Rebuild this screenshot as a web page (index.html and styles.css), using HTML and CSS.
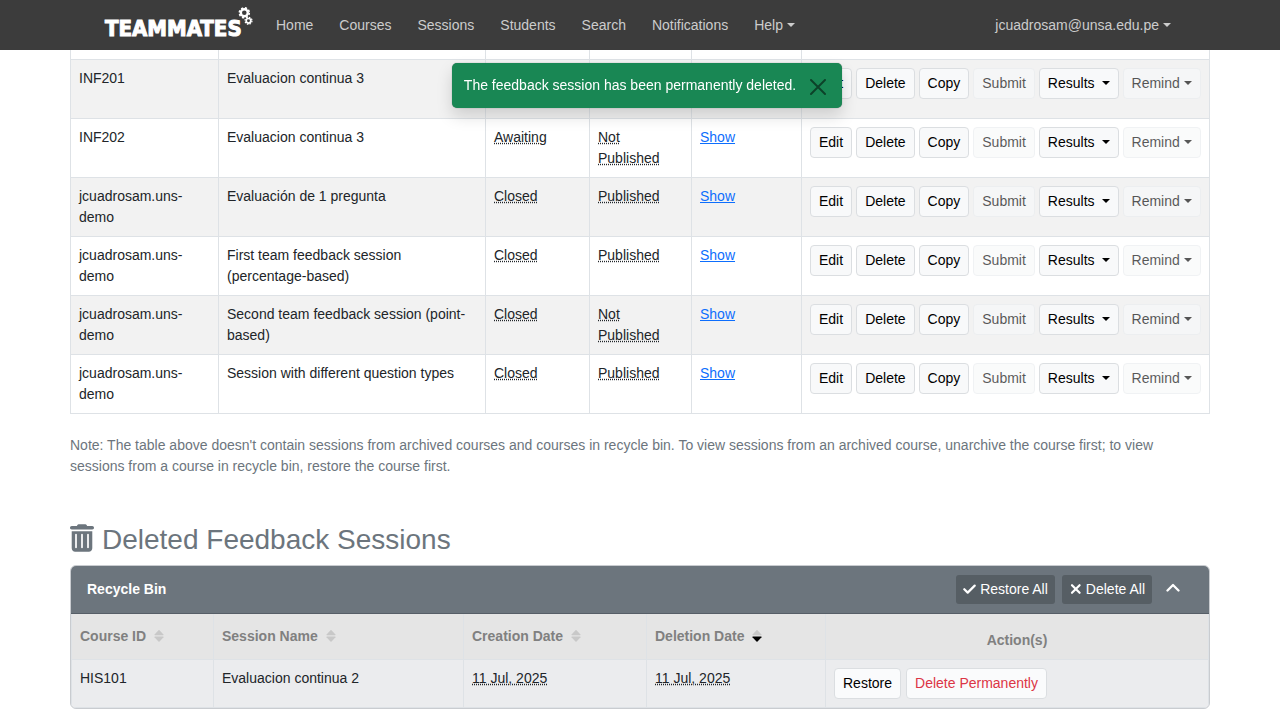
FILE: index.html
```html
<!DOCTYPE html>
<html lang="en">
<head>
<meta charset="utf-8">
<meta name="viewport" content="width=device-width, initial-scale=1">
<title>TEAMMATES - Sessions</title>
<link rel="stylesheet" href="styles.css">
</head>
<body>
<svg class="defs" aria-hidden="true">
  <symbol id="sort" viewBox="0 0 10 14"><path class="sort-up" d="M1 6.300Q0 6.300.5 5.500L4.500 1.200Q5 .8 5.500 1.200L9.500 5.500Q10 6.300 9 6.300z"/><path class="sort-down" d="M1 7.500Q0 7.500.5 8.300L4.500 12.600Q5 13 5.500 12.600L9.500 8.300Q10 7.500 9 7.500z"/></symbol>
</svg>
<header class="navbar">
  <nav class="nav-inner">
    <a class="brand" href="#" aria-label="TEAMMATES">
      <svg width="148" height="36" viewBox="0 0 148 36">
        <text class="brand-text" x="0" y="29">TEAMMATES</text>
        <g fill="none" stroke="#fff">
          <circle cx="139.300" cy="5.800" r="3.500" stroke-width="2.400"/>
          <circle cx="139.300" cy="5.800" r="5" stroke-width="1.600" stroke-dasharray="2.200 1.727"/>
          <circle cx="143.500" cy="13.800" r="2.300" stroke-width="1.700"/>
          <circle cx="143.500" cy="13.800" r="3.500" stroke-width="1.200" stroke-dasharray="1.500 1.249"/>
        </g>
      </svg>
    </a>
    <ul class="nav-links">
      <li><a href="#">Home</a></li>
      <li><a href="#">Courses</a></li>
      <li><a href="#">Sessions</a></li>
      <li><a href="#">Students</a></li>
      <li><a href="#">Search</a></li>
      <li><a href="#">Notifications</a></li>
      <li><a class="caret" href="#">Help</a></li>
    </ul>
    <a class="account caret" href="#">jcuadrosam@unsa.edu.pe</a>
  </nav>
</header>

<div class="toast-area">
  <div class="toast" role="status">
    <span>The feedback session has been permanently deleted.</span>
    <button class="toast-close" type="button" aria-label="Close"><svg width="16" height="16" viewBox="0 0 16 16"><path d="M1 1 15 15M15 1 1 15" fill="none" stroke="#000" stroke-width="2" stroke-linecap="round"/></svg></button>
  </div>
</div>

<main class="container">
  <table class="table sessions">
    <colgroup><col class="c-course"><col><col class="c-sub"><col class="c-pub"><col class="c-rate"><col class="c-actions"></colgroup>
    <tbody>
      <tr class="edge"><td></td><td></td><td></td><td></td><td></td><td></td></tr>
      <tr><td>INF201</td><td>Evaluacion continua 3</td><td><abbr>Awaiting</abbr></td><td><abbr>Not Published</abbr></td><td><a href="#">Show</a></td>
        <td><div class="actions"><button class="btn">Edit</button><button class="btn">Delete</button><button class="btn">Copy</button><button class="btn" disabled>Submit</button><button class="btn caret wide">Results</button><button class="btn caret" disabled>Remind</button></div></td></tr>
      <tr><td>INF202</td><td>Evaluacion continua 3</td><td><abbr>Awaiting</abbr></td><td><abbr>Not Published</abbr></td><td><a href="#">Show</a></td>
        <td><div class="actions"><button class="btn">Edit</button><button class="btn">Delete</button><button class="btn">Copy</button><button class="btn" disabled>Submit</button><button class="btn caret wide">Results</button><button class="btn caret" disabled>Remind</button></div></td></tr>
      <tr><td>jcuadrosam.uns-demo</td><td>Evaluación de 1 pregunta</td><td><abbr>Closed</abbr></td><td><abbr>Published</abbr></td><td><a href="#">Show</a></td>
        <td><div class="actions"><button class="btn">Edit</button><button class="btn">Delete</button><button class="btn">Copy</button><button class="btn" disabled>Submit</button><button class="btn caret wide">Results</button><button class="btn caret" disabled>Remind</button></div></td></tr>
      <tr><td>jcuadrosam.uns-demo</td><td>First team feedback session (percentage-based)</td><td><abbr>Closed</abbr></td><td><abbr>Published</abbr></td><td><a href="#">Show</a></td>
        <td><div class="actions"><button class="btn">Edit</button><button class="btn">Delete</button><button class="btn">Copy</button><button class="btn" disabled>Submit</button><button class="btn caret wide">Results</button><button class="btn caret" disabled>Remind</button></div></td></tr>
      <tr><td>jcuadrosam.uns-demo</td><td>Second team feedback session (point-based)</td><td><abbr>Closed</abbr></td><td><abbr>Not Published</abbr></td><td><a href="#">Show</a></td>
        <td><div class="actions"><button class="btn">Edit</button><button class="btn">Delete</button><button class="btn">Copy</button><button class="btn" disabled>Submit</button><button class="btn caret wide">Results</button><button class="btn caret" disabled>Remind</button></div></td></tr>
      <tr><td>jcuadrosam.uns-demo</td><td>Session with different question types</td><td><abbr>Closed</abbr></td><td><abbr>Published</abbr></td><td><a href="#">Show</a></td>
        <td><div class="actions"><button class="btn">Edit</button><button class="btn">Delete</button><button class="btn">Copy</button><button class="btn" disabled>Submit</button><button class="btn caret wide">Results</button><button class="btn caret" disabled>Remind</button></div></td></tr>
    </tbody>
  </table>

  <p class="note">Note: The table above doesn't contain sessions from archived courses and courses in recycle bin. To view sessions from an archived course, unarchive the course first; to view sessions from a course in recycle bin, restore the course first.</p>

  <h2 class="section-title">
    <svg width="24" height="28" viewBox="0 0 448 512" fill="currentColor" aria-hidden="true"><path fill-rule="evenodd" d="M135.200 17.700C140.600 6.800 151.700 0 163.800 0h120.400c12.100 0 23.200 6.800 28.600 17.700L320 32h96c17.700 0 32 14.300 32 32s-14.300 32-32 32H32C14.300 96 0 81.700 0 64s14.300-32 32-32h96zM32 128h384v320c0 35.300-28.700 64-64 64H96c-35.300 0-64-28.700-64-64zm80 48c-9 0-16 7-16 16v240c0 9 7 16 16 16s16-7 16-16V192c0-9-7-16-16-16zm112 0c-9 0-16 7-16 16v240c0 9 7 16 16 16s16-7 16-16V192c0-9-7-16-16-16zm112 0c-9 0-16 7-16 16v240c0 9 7 16 16 16s16-7 16-16V192c0-9-7-16-16-16z"/></svg>
    Deleted Feedback Sessions
  </h2>

  <section class="card">
    <div class="card-header">
      <strong>Recycle Bin</strong>
      <div class="card-tools">
        <button class="btn-dark" type="button"><svg width="13" height="12" viewBox="0 0 13 12"><path d="M1.300 6.200 4.700 9.600 11.700 2.600" fill="none" stroke="#fff" stroke-width="2.200" stroke-linecap="round" stroke-linejoin="round"/></svg>Restore All</button>
        <button class="btn-dark" type="button"><svg width="13" height="12" viewBox="0 0 13 12"><path d="M3 2.200 10.600 9.800M10.600 2.200 3 9.800" fill="none" stroke="#fff" stroke-width="2.200" stroke-linecap="round"/></svg>Delete All</button>
        <button class="toggle" type="button" aria-label="Collapse"><svg width="14" height="14" viewBox="0 0 14 14"><path d="M1.500 9.500 7 4 12.500 9.500" fill="none" stroke="#fff" stroke-width="2.300" stroke-linecap="round" stroke-linejoin="round"/></svg></button>
      </div>
    </div>
    <table class="table bin">
      <colgroup><col class="b-course"><col><col class="b-created"><col class="b-deleted"><col class="b-actions"></colgroup>
      <thead>
        <tr>
          <th><button class="sort">Course ID<svg width="10" height="14"><use href="#sort"/></svg></button></th>
          <th><button class="sort">Session Name<svg width="10" height="14"><use href="#sort"/></svg></button></th>
          <th><button class="sort">Creation Date<svg width="10" height="14"><use href="#sort"/></svg></button></th>
          <th><button class="sort active">Deletion Date<svg width="10" height="14"><use href="#sort"/></svg></button></th>
          <th class="action-head">Action(s)</th>
        </tr>
      </thead>
      <tbody>
        <tr><td>HIS101</td><td>Evaluacion continua 2</td><td><abbr>11 Jul, 2025</abbr></td><td><abbr>11 Jul, 2025</abbr></td>
          <td><div class="actions bin-actions"><button class="btn">Restore</button><button class="btn danger">Delete Permanently</button></div></td></tr>
      </tbody>
    </table>
  </section>
</main>
</body>
</html>
```

FILE: styles.css
```css
* { box-sizing: border-box; }
body {
  margin: 0;
  padding-top: 50px;
  background: #fff;
  color: #212529;
  font: 14px/21px "Liberation Sans", Arial, sans-serif;
}
.defs { position: absolute; width: 0; height: 0; }
button { font: inherit; cursor: pointer; }
button:disabled { cursor: default; }
a { color: #0d6efd; }

/* Navigation */
.navbar { position: fixed; top: 0; left: 0; right: 0; z-index: 10; background: #3c3c3c; }
.nav-inner {
  display: flex;
  align-items: center;
  max-width: 1140px;
  height: 50px;
  margin: 0 auto;
  padding: 0 26px 0 35px;
}
.brand { display: flex; }
.brand svg { overflow: visible; }
.brand-text {
  fill: #fff;
  stroke: #fff;
  stroke-width: 1px;
  font: bold 22px "DejaVu Sans Condensed", "DejaVu Sans", sans-serif;
}
.nav-links { display: flex; margin: 0 auto 0 10px; padding: 0; list-style: none; }
.nav-links a, .account { display: block; padding: 0 13px; color: #ccc; text-decoration: none; }

.caret::after {
  content: "";
  display: inline-block;
  margin-left: 4px;
  vertical-align: 3px;
  border: 4px solid transparent;
  border-top-color: currentColor;
  border-bottom: 0;
}
.wide::after { margin-left: 7px; }

/* Notification */
.toast-area {
  position: fixed;
  top: 63px;
  left: 0;
  right: 0;
  z-index: 20;
  display: flex;
  justify-content: center;
  padding-left: 14px;
}
.toast {
  display: flex;
  align-items: center;
  gap: 14px;
  padding: 12px 16px 12px 12px;
  border-radius: 5px;
  background: #198754;
  color: #fff;
  box-shadow: 0 0 1px rgba(0, 0, 0, .5), 0 8px 16px rgba(0, 0, 0, .15);
}
.toast-close { display: flex; padding: 3px 0 0; border: 0; background: none; opacity: .5; }

/* Tables */
.container { max-width: 1140px; margin: 0 auto; }
.table { width: 100%; table-layout: fixed; border-collapse: collapse; }
.table td, .table th { padding: 8px; border: 1px solid #dee2e6; vertical-align: top; text-align: left; }
.sessions tr { height: 59px; }
.sessions tr:nth-child(even) { background: #f2f2f2; }
.sessions .edge { height: 9px; }
.sessions .edge td { padding: 0; border-top: 0; }
.c-course { width: 148px; }
.c-sub { width: 104px; }
.c-pub { width: 102px; }
.c-rate { width: 110px; }
.c-actions { width: 408px; }
abbr { text-decoration: underline dotted; }

.actions { display: flex; gap: 4px; }
.btn {
  padding: 4px 8px;
  border: 1px solid #dbdee1;
  border-radius: 4px;
  background: #f8f9fa;
  color: #000;
  white-space: nowrap;
}
.btn:disabled { border-color: #e9ecef; opacity: .65; }
.danger { color: #dc3545; }

.note { margin: 21px 0 46px; color: #6c757d; }
.section-title {
  display: flex;
  align-items: center;
  gap: 8px;
  margin: 0 0 8px;
  color: #6c757d;
  font-size: 28px;
  font-weight: 400;
  line-height: 34px;
}
.section-title svg { margin-bottom: 3px; }

/* Recycle bin */
.card { overflow: hidden; border: 1px solid #c9ccd0; border-radius: 6px; background: #ebecee; }
.card-header {
  display: flex;
  align-items: center;
  justify-content: space-between;
  padding: 9px 16px;
  border-bottom: 1px solid #565e67;
  background: #6c757d;
  color: #fff;
}
.card-tools { display: flex; align-items: center; gap: 7px; }
.btn-dark {
  display: flex;
  align-items: center;
  gap: 4px;
  padding: 4px 7px;
  border: 0;
  border-radius: 3px;
  background: #565e64;
  color: #fff;
}
.toggle { display: flex; padding: 0 13px 2px 7px; border: 0; background: none; }
.bin tr:first-child th { border-top: 0; }
.bin th { background: #e5e5e5; color: #808080; }
.b-course { width: 142px; }
.b-created { width: 183px; }
.b-deleted { width: 179px; }
.b-actions { width: 383px; }
.bin .action-head { text-align: center; vertical-align: bottom; }
.sort {
  display: flex;
  align-items: center;
  gap: 8px;
  height: 29px;
  padding: 0;
  border: 0;
  background: none;
  color: inherit;
  font-weight: 700;
}
.sort svg { fill: #c8c8c8; }
.sort-down { fill: var(--down, #c8c8c8); }
.active svg { --down: #000; }
.bin-actions { gap: 5px; }
.bin-actions .btn { background: #fafbfc; }
```
